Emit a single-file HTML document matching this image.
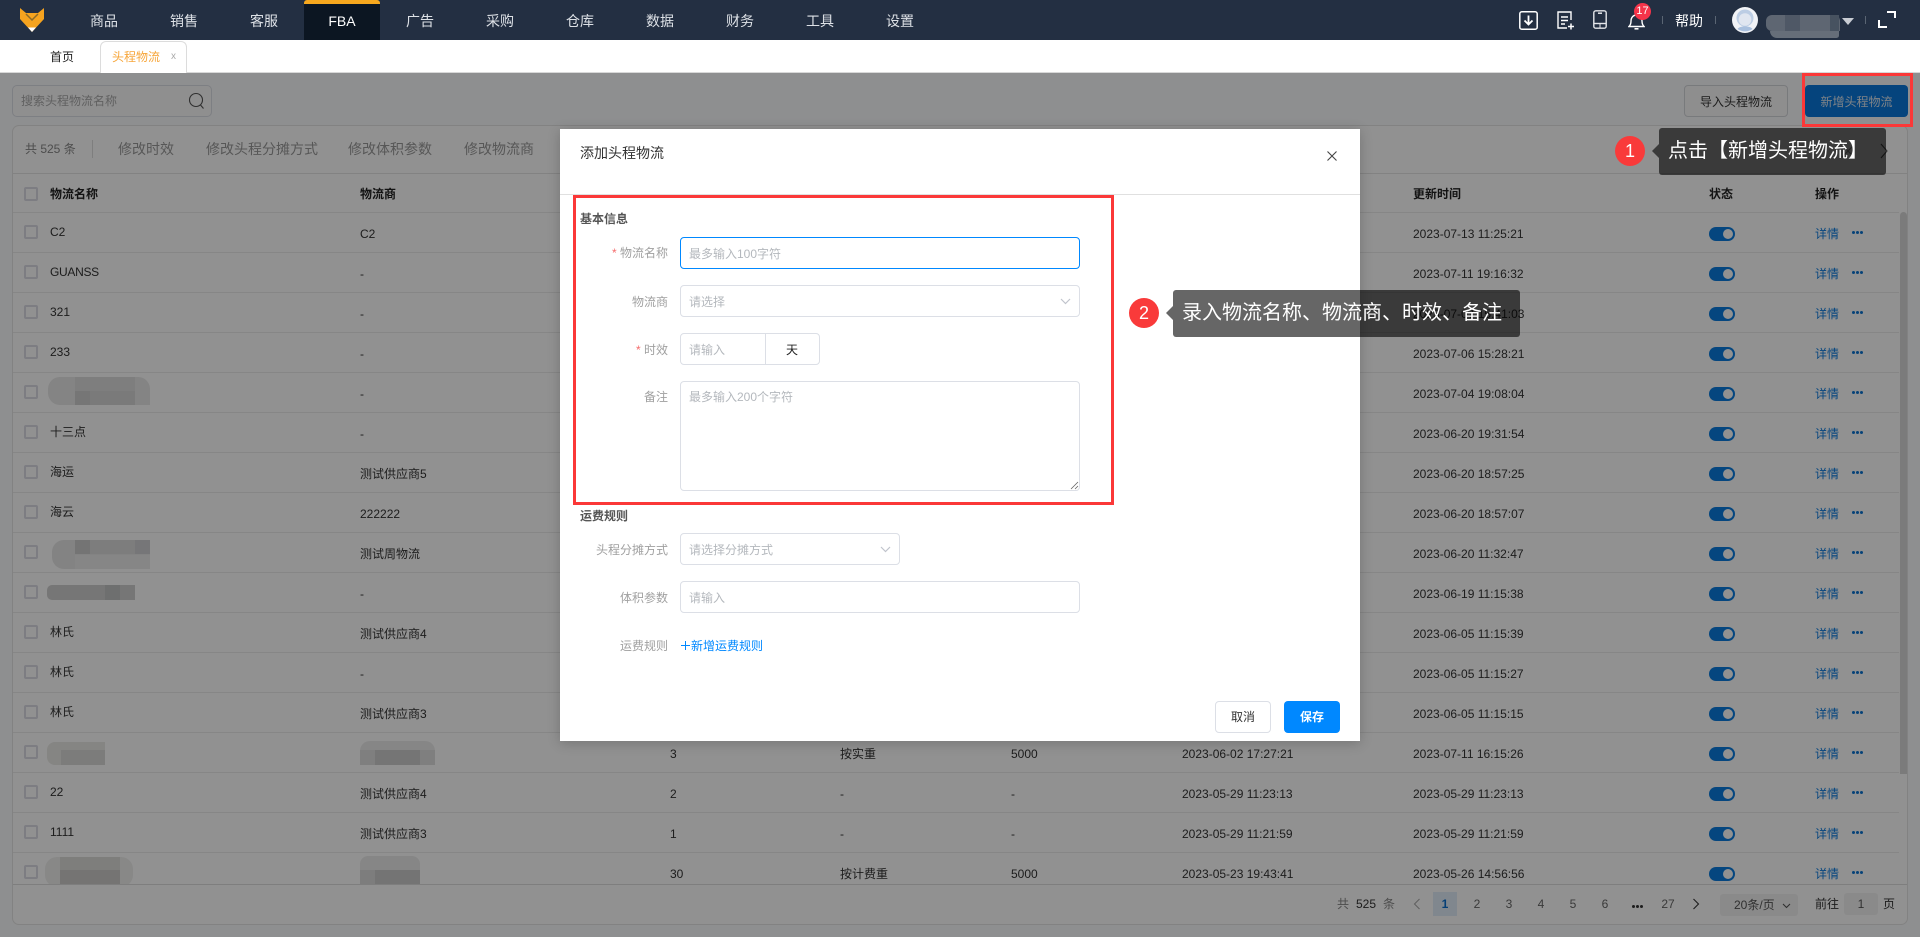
<!DOCTYPE html>
<html lang="zh-CN">
<head>
<meta charset="utf-8">
<title>头程物流</title>
<style>
html,body{margin:0;padding:0;width:1920px;height:937px;overflow:hidden;background:#fafbfd;font-family:"Liberation Sans","Noto Sans CJK SC",sans-serif;font-size:12px;color:#333}
*{box-sizing:border-box}
.a,.t{position:absolute}
.t{white-space:nowrap;line-height:16px}
#nav{left:0;top:0;width:1920px;height:40px;background:#232f42;z-index:30}
#nav .m{position:absolute;top:12px;width:60px;text-align:center;font-size:14px;line-height:18px;color:#dde1e6}
#tabs{left:0;top:40px;width:1920px;height:33px;background:#fff;border-bottom:1px solid #d8d8d8;z-index:30}
#mask{left:0;top:73px;width:1920px;height:864px;background:rgba(0,0,0,.43);z-index:10}
.card{left:12px;top:125px;width:1896px;height:800px;background:#fff;border:1px solid #e4e4e4;border-radius:7px}
.clip{left:0;top:0;width:1899px;height:885px;overflow:hidden}
.r{position:absolute;left:0;width:1899px;height:40px}
.r:before{content:"";position:absolute;left:13px;right:0;top:0;height:1px;background:#ebebeb}
.r .t{color:#333}
.cb{position:absolute;left:24px;top:13px;width:14px;height:14px;border:2px solid #dcdce4;border-radius:2px;background:#fff}
.n{left:50px;top:12px}.s{left:360px;top:14px}.c3{left:670px;top:14px}.c4{left:840px;top:14px}.c5{left:1011px;top:14px}.c6{left:1182px;top:14px}.u{left:1413px;top:14px}
.sw{position:absolute;left:1709px;top:15px;width:26px;height:14px;border-radius:7px;background:#0a7cdf}
.sw:after{content:"";position:absolute;right:2px;top:2px;width:10px;height:10px;border-radius:50%;background:#fff}
.r .lk{left:1815px;top:14px;color:#0c7ce0}
.dt{position:absolute;left:1852px;top:19px;width:11px;height:3px}
.dt:before{content:"";position:absolute;left:0;top:0;width:3px;height:3px;border-radius:50%;background:#0c74d4;box-shadow:4px 0 0 #0c74d4,8px 0 0 #0c74d4}
.bl{position:absolute;background:#e6e6e6;border-radius:12px}
.bl i{position:absolute;top:0;bottom:0;background:#d4d4d4}
#modal{left:560px;top:129px;width:800px;height:612px;background:#fff;z-index:20;box-shadow:0 2px 12px rgba(0,0,0,.2)}
.f{position:absolute;border:1px solid #dcdfe6;border-radius:4px;background:#fff;height:32px}
.ph{color:#b4b8bd}
.lb{color:#a0a0a0;text-align:right;width:120px;left:548px}
.lb em{font-style:normal;color:#f56c6c}
.sec{left:580px;font-weight:bold;color:#555}
.pg{top:896px;color:#666;width:24px;text-align:center}
.box{z-index:25;border:3px solid #fb3838;position:absolute;background:transparent}
.tip{z-index:26;position:absolute;background:rgba(0,0,0,.6);border-radius:3px;color:#fff;font-size:20px;line-height:28px;white-space:nowrap}
.tipa{z-index:26;position:absolute;width:0;height:0;border:7px solid transparent;border-right:7px solid rgba(0,0,0,.6);border-left:0}
.num{z-index:26;position:absolute;width:30px;height:30px;border-radius:50%;background:#f93a3a;color:#fff;text-align:center;line-height:30px;font-size:18px}
svg{display:block;position:absolute}
</style>
</head>
<body>

<!-- NAV -->
<div id="nav" class="a">
  <svg style="left:20px;top:8px" width="24" height="24" viewBox="0 0 24 24"><polygon points="0,0 6,5 18,5 24,0 24,11 12,24 0,11" fill="#f5a31f"/><polygon points="8,19.500 16,19.500 12,24" fill="#fff"/><polyline points="6,6 12,12 18,6" fill="none" stroke="#8a6a2a" stroke-width="1.500"/></svg>
  <div class="m" style="left:74px">商品</div>
  <div class="m" style="left:154px">销售</div>
  <div class="m" style="left:234px">客服</div>
  <div class="a" style="left:304px;top:0;width:76px;height:40px;background:#0c1622;border-top:4px solid #f7a81e;border-radius:3px 3px 0 0"></div>
  <div class="m" style="left:312px;color:#fff">FBA</div>
  <div class="m" style="left:390px">广告</div>
  <div class="m" style="left:470px">采购</div>
  <div class="m" style="left:550px">仓库</div>
  <div class="m" style="left:630px">数据</div>
  <div class="m" style="left:710px">财务</div>
  <div class="m" style="left:790px">工具</div>
  <div class="m" style="left:870px">设置</div>

  <svg style="left:1519px;top:11px" width="19" height="19" viewBox="0 0 19 19" fill="none" stroke="#fff" stroke-width="1.500"><rect x=".8" y=".8" width="17.400" height="17.400" rx="2"/><path d="M9.500 4.500v9M5.500 9.500l4 4 4-4" stroke-width="1.800"/></svg>
  <svg style="left:1557px;top:11px" width="18" height="19" viewBox="0 0 18 19" fill="none" stroke="#fff" stroke-width="1.400"><path d="M14 9V1H1v16h9"/><path d="M4 6h7M4 9.500h7M4 13h4"/><path d="M14 12.500v6M11 15.500h6" stroke-width="1.500"/></svg>
  <svg style="left:1593px;top:10px" width="14" height="19" viewBox="0 0 14 19" fill="none" stroke="#e4e6ea" stroke-width="1.400"><rect x=".8" y=".8" width="12.400" height="17.400" rx="2"/><path d="M1 13.500h12"/><path d="M5 3.200h4" stroke-width="1.500"/><path d="M7 14v4" stroke-width="1"/></svg>
  <svg style="left:1628px;top:12px" width="17" height="18" viewBox="0 0 17 18" fill="none" stroke="#fff" stroke-width="1.400"><path d="M1 14.500c1.500-1.500 2-3 2-5.500 0-3.500 2.200-6 5.500-6s5.500 2.500 5.500 6c0 2.500.5 4 2 5.500z"/><path d="M6.500 16.800h4" stroke-width="1.600"/></svg>
  <div class="a" style="left:1634px;top:3px;width:17px;height:17px;border-radius:50%;background:#f5344a;color:#fff;font-size:11px;line-height:17px;text-align:center">17</div>
  <div class="a" style="left:1662px;top:16px;width:1px;height:8px;background:#5a6573"></div>
  <div class="t" style="left:1675px;top:12px;font-size:14px;line-height:18px;color:#fff">帮助</div>
  <div class="a" style="left:1715px;top:16px;width:1px;height:8px;background:#5a6573"></div>
  <svg style="left:1732px;top:7px" width="26" height="26" viewBox="0 0 26 26"><circle cx="13" cy="13" r="13" fill="#f1f3f7"/><circle cx="13" cy="11" r="8.500" fill="#bccde4"/><circle cx="13" cy="12.500" r="6.300" fill="#e0e6f0"/><path d="M5.500 22c2-3.500 13-3.500 15 0a13 13 0 0 1-15 0z" fill="#a9c0de"/></svg>
  <div class="a" style="left:1766px;top:15px;width:74px;height:16px;background:#5e6672;border-radius:6px 6px 0 6px"></div>
  <div class="a" style="left:1785px;top:15px;width:15px;height:16px;background:#4f5866"></div>
  <div class="a" style="left:1830px;top:15px;width:9px;height:16px;background:#475260"></div>
  <div class="a" style="left:1770px;top:31px;width:69px;height:7px;background:#666e79;border-radius:0 0 8px 22px"></div>
  <div class="a" style="left:1842px;top:18px;width:0;height:0;border:6px solid transparent;border-top:7px solid #c8ccd3;border-bottom:0"></div>
  <div class="a" style="left:1865px;top:16px;width:1px;height:8px;background:#5a6573"></div>
  <svg style="left:1878px;top:10px" width="18" height="19" viewBox="0 0 18 19" fill="none" stroke="#fff" stroke-width="2"><path d="M9 2h8v6"/><path d="M1 10v7h8"/></svg>
</div>

<!-- TABS -->
<div id="tabs" class="a">
  <div class="t" style="left:50px;top:9px;color:#222">首页</div>
  <div class="a" style="left:100px;top:1px;width:87px;height:32px;background:#fff;border:1px solid #dcdcdc;border-bottom:0;border-radius:6px 6px 0 0"></div>
  <div class="t" style="left:112px;top:9px;color:#f7a63a">头程物流</div>
  <div class="t" style="left:171px;top:9px;color:#aaa;font-size:10px">x</div>
</div>

<!-- SEARCH -->
<div class="a" style="left:12px;top:85px;width:200px;height:32px;border:1px solid #dcdfe6;border-radius:5px;background:#fbfbfc"></div>
<div class="t" style="left:21px;top:93px;color:#aaa">搜索头程物流名称</div>
<svg style="left:188px;top:92px" width="17" height="18" viewBox="0 0 17 18" fill="none" stroke="#555" stroke-width="1.100"><circle cx="8" cy="8" r="6.500"/><path d="M12.500 13l3 3.500"/></svg>

<div class="a" style="left:1684px;top:85px;width:104px;height:32px;border:1px solid #d4d6da;border-radius:4px;background:#fafafa;color:#333;text-align:center;line-height:32px">导入头程物流</div>
<div class="a" style="left:1805px;top:85px;width:103px;height:32px;border-radius:4px;background:#0a78dc;color:#dfe6ee;text-align:center;line-height:34px">新增头程物流</div>

<!-- CARD -->
<div class="a card"></div>
<div class="a" style="left:13px;top:173px;width:1894px;height:1px;background:#e4e4e4"></div>
<div class="t" style="left:25px;top:141px;color:#888">共 525 条</div>
<div class="a" style="left:92px;top:140px;width:1px;height:18px;background:#dedede"></div>
<div class="t" style="left:118px;top:141px;color:#999;font-size:14px">修改时效</div>
<div class="t" style="left:206px;top:141px;color:#999;font-size:14px">修改头程分摊方式</div>
<div class="t" style="left:348px;top:141px;color:#999;font-size:14px">修改体积参数</div>
<div class="t" style="left:464px;top:141px;color:#999;font-size:14px">修改物流商</div>
<svg style="left:1840px;top:143px" width="16" height="16" viewBox="0 0 16 16" fill="none" stroke="#999" stroke-width="1.200"><path d="M2 2l12 12M14 2L2 14"/></svg>
<svg style="left:1880px;top:143px" width="9" height="16" viewBox="0 0 9 16" fill="none" stroke="#555" stroke-width="1.100"><path d="M1 1l6 7-6 7"/></svg>

<!-- TABLE HEAD -->
<div class="cb" style="top:187px"></div>
<div class="t" style="left:50px;top:186px;font-weight:bold;color:#222">物流名称</div>
<div class="t" style="left:360px;top:186px;font-weight:bold;color:#222">物流商</div>
<div class="t" style="left:1413px;top:186px;font-weight:bold;color:#222">更新时间</div>
<div class="t" style="left:1709px;top:186px;font-weight:bold;color:#222">状态</div>
<div class="t" style="left:1815px;top:186px;font-weight:bold;color:#222">操作</div>

<!-- TABLE BODY -->
<div class="a clip">
<div class="r" style="top:212px"><i class="cb"></i><span class="t n">C2</span><span class="t s">C2</span><span class="t u">2023-07-13 11:25:21</span><i class="sw"></i><span class="t lk">详情</span><i class="dt"></i></div>
<div class="r" style="top:252px"><i class="cb"></i><span class="t n" style="letter-spacing:-.3px">GUANSS</span><span class="t s">-</span><span class="t u">2023-07-11 19:16:32</span><i class="sw"></i><span class="t lk">详情</span><i class="dt"></i></div>
<div class="r" style="top:292px"><i class="cb"></i><span class="t n">321</span><span class="t s">-</span><span class="t u">2023-07-07 15:41:03</span><i class="sw"></i><span class="t lk">详情</span><i class="dt"></i></div>
<div class="r" style="top:332px"><i class="cb"></i><span class="t n">233</span><span class="t s">-</span><span class="t u">2023-07-06 15:28:21</span><i class="sw"></i><span class="t lk">详情</span><i class="dt"></i></div>
<div class="r" style="top:372px"><i class="cb"></i><div class="bl" style="left:48px;top:5px;width:102px;height:28px;border-radius:12px 12px 0 12px;background:#e8e8e8"><i style="left:27px;width:60px;bottom:14px;background:#dedede"></i><i style="left:27px;width:15px;top:14px;background:#cfcfcf"></i><i style="left:42px;width:45px;top:14px;background:#d6d6d6"></i></div><span class="t s">-</span><span class="t u">2023-07-04 19:08:04</span><i class="sw"></i><span class="t lk">详情</span><i class="dt"></i></div>
<div class="r" style="top:412px"><i class="cb"></i><span class="t n">十三点</span><span class="t s">-</span><span class="t u">2023-06-20 19:31:54</span><i class="sw"></i><span class="t lk">详情</span><i class="dt"></i></div>
<div class="r" style="top:452px"><i class="cb"></i><span class="t n">海运</span><span class="t s">测试供应商5</span><span class="t u">2023-06-20 18:57:25</span><i class="sw"></i><span class="t lk">详情</span><i class="dt"></i></div>
<div class="r" style="top:492px"><i class="cb"></i><span class="t n">海云</span><span class="t s">222222</span><span class="t u">2023-06-20 18:57:07</span><i class="sw"></i><span class="t lk">详情</span><i class="dt"></i></div>
<div class="r" style="top:532px"><i class="cb"></i><div class="bl" style="left:52px;top:8px;width:98px;height:29px;border-radius:12px 12px 0 12px;background:#e6e6e6"><i style="left:23px;right:15px;bottom:15px;background:#dcdcdc"></i><i style="left:23px;width:15px;bottom:15px;background:#cccccc"></i><i style="right:0;width:15px;bottom:15px;background:#d0d0d4"></i><i style="left:23px;right:0;top:15px;background:#ececec"></i></div><span class="t s">测试周物流</span><span class="t u">2023-06-20 11:32:47</span><i class="sw"></i><span class="t lk">详情</span><i class="dt"></i></div>
<div class="r" style="top:572px"><i class="cb"></i><div class="bl" style="left:47px;top:13px;width:88px;height:15px;border-radius:5px 0 0 5px;background:#cfcfcf"><i style="left:58px;width:15px;background:#c2c4c4"></i></div><span class="t s">-</span><span class="t u">2023-06-19 11:15:38</span><i class="sw"></i><span class="t lk">详情</span><i class="dt"></i></div>
<div class="r" style="top:612px"><i class="cb"></i><span class="t n">林氏</span><span class="t s">测试供应商4</span><span class="t u">2023-06-05 11:15:39</span><i class="sw"></i><span class="t lk">详情</span><i class="dt"></i></div>
<div class="r" style="top:652px"><i class="cb"></i><span class="t n">林氏</span><span class="t s">-</span><span class="t u">2023-06-05 11:15:27</span><i class="sw"></i><span class="t lk">详情</span><i class="dt"></i></div>
<div class="r" style="top:692px"><i class="cb"></i><span class="t n">林氏</span><span class="t s">测试供应商3</span><span class="t u">2023-06-05 11:15:15</span><i class="sw"></i><span class="t lk">详情</span><i class="dt"></i></div>
<div class="r" style="top:732px"><i class="cb"></i><div class="bl" style="left:47px;top:10px;width:58px;height:23px;border-radius:8px 0 0 8px;background:#eaeae6"><i style="left:14px;right:0;top:8px;background:#dadad8"></i></div><div class="bl" style="left:360px;top:9px;width:75px;height:24px;border-radius:10px 10px 0 0;background:#ececec"><i style="left:0;right:0;top:9px;background:#e0e0e0"></i><i style="left:15px;width:45px;top:9px;background:#cecece"></i></div><span class="t c3">3</span><span class="t c4">按实重</span><span class="t c5">5000</span><span class="t c6">2023-06-02 17:27:21</span><span class="t u">2023-07-11 16:15:26</span><i class="sw"></i><span class="t lk">详情</span><i class="dt"></i></div>
<div class="r" style="top:772px"><i class="cb"></i><span class="t n">22</span><span class="t s">测试供应商4</span><span class="t c3">2</span><span class="t c4">-</span><span class="t c5">-</span><span class="t c6">2023-05-29 11:23:13</span><span class="t u">2023-05-29 11:23:13</span><i class="sw"></i><span class="t lk">详情</span><i class="dt"></i></div>
<div class="r" style="top:812px"><i class="cb"></i><span class="t n">1111</span><span class="t s">测试供应商3</span><span class="t c3">1</span><span class="t c4">-</span><span class="t c5">-</span><span class="t c6">2023-05-29 11:21:59</span><span class="t u">2023-05-29 11:21:59</span><i class="sw"></i><span class="t lk">详情</span><i class="dt"></i></div>
<div class="r" style="top:852px"><i class="cb"></i><div class="bl" style="left:45px;top:5px;width:88px;height:30px;background:#f0f0ee"><i style="left:15px;width:60px;top:0;bottom:14px;background:#dedddb"></i><i style="left:15px;width:60px;top:13px;background:#cecdcb"></i></div><div class="bl" style="left:360px;top:4px;width:60px;height:31px;border-radius:8px 8px 0 0;background:#ececec"><i style="left:0;right:0;top:14px;background:#dcdcdc"></i><i style="left:15px;width:45px;top:14px;background:#cdcdcd"></i></div><span class="t c3">30</span><span class="t c4">按计费重</span><span class="t c5">5000</span><span class="t c6">2023-05-23 19:43:41</span><span class="t u">2023-05-26 14:56:56</span><i class="sw"></i><span class="t lk">详情</span><i class="dt"></i></div>
</div>
<div class="a" style="left:13px;top:884px;width:1894px;height:1px;background:#dedede"></div>
<div class="a" style="left:1900px;top:212px;width:7px;height:562px;background:#d8d8d8;border-radius:4px 4px 0 0"></div>

<!-- PAGINATION -->
<div class="t" style="left:1337px;top:896px;color:#888">共</div>
<div class="t" style="left:1356px;top:896px;color:#333">525</div>
<div class="t" style="left:1383px;top:896px;color:#888">条</div>
<svg style="left:1413px;top:898px" width="8" height="12" viewBox="0 0 8 12" fill="none" stroke="#aaa" stroke-width="1.100"><path d="M6.500 1L1.500 6l5 5"/></svg>
<div class="a" style="left:1433px;top:892px;width:24px;height:24px;background:#e2eefa;color:#0a6fd0;text-align:center;line-height:24px;font-weight:bold">1</div>
<div class="t pg" style="left:1465px">2</div>
<div class="t pg" style="left:1497px">3</div>
<div class="t pg" style="left:1529px">4</div>
<div class="t pg" style="left:1561px">5</div>
<div class="t pg" style="left:1593px">6</div>
<div class="a" style="left:1632px;top:905px;width:3px;height:3px;border-radius:50%;background:#333;box-shadow:4px 0 0 #333,8px 0 0 #333"></div>
<div class="t pg" style="left:1656px">27</div>
<svg style="left:1692px;top:898px" width="8" height="12" viewBox="0 0 8 12" fill="none" stroke="#333" stroke-width="1.100"><path d="M1.500 1l5 5-5 5"/></svg>
<div class="a" style="left:1720px;top:894px;width:78px;height:22px;background:#f3f3f3;border-radius:3px"></div>
<div class="t" style="left:1734px;top:897px;color:#555">20条/页</div>
<svg style="left:1782px;top:903px" width="9" height="6" viewBox="0 0 9 6" fill="none" stroke="#555" stroke-width="1.100"><path d="M1 1l3.500 3.500L8 1"/></svg>
<div class="t" style="left:1815px;top:896px;color:#333">前往</div>
<div class="a" style="left:1844px;top:893px;width:34px;height:22px;background:#f3f3f3;border-radius:3px;text-align:center;line-height:22px;color:#555">1</div>
<div class="t" style="left:1883px;top:896px;color:#333">页</div>

<div id="mask" class="a"></div>

<!-- MODAL -->
<div id="modal" class="a"></div>
<div style="position:absolute;left:0;top:0;z-index:21;width:0;height:0">
  <div class="t" style="left:580px;top:144px;font-size:14px;line-height:18px;color:#333">添加头程物流</div>
  <svg style="left:1326px;top:150px" width="12" height="12" viewBox="0 0 12 12" fill="none" stroke="#444" stroke-width="1.100"><path d="M1.500 1.500l9 9M10.500 1.500l-9 9"/></svg>
  <div class="a" style="left:560px;top:194px;width:800px;height:1px;background:#e0e0e0"></div>

  <div class="t sec" style="top:211px">基本信息</div>

  <div class="t lb" style="top:245px"><em>* </em>物流名称</div>
  <div class="f" style="left:680px;top:237px;width:400px;border-color:#0088ff"></div>
  <div class="t ph" style="left:689px;top:246px">最多输入100字符</div>

  <div class="t lb" style="top:294px">物流商</div>
  <div class="f" style="left:680px;top:285px;width:400px"></div>
  <div class="t ph" style="left:689px;top:294px">请选择</div>
  <svg style="left:1060px;top:298px" width="11" height="7" viewBox="0 0 11 7" fill="none" stroke="#c0c4cc" stroke-width="1.200"><path d="M1 1l4.500 4.500L10 1"/></svg>

  <div class="t lb" style="top:342px"><em>* </em>时效</div>
  <div class="f" style="left:680px;top:333px;width:140px"></div>
  <div class="a" style="left:765px;top:333px;width:1px;height:32px;background:#dcdfe6"></div>
  <div class="t ph" style="left:689px;top:342px">请输入</div>
  <div class="t" style="left:786px;top:342px;color:#222">天</div>

  <div class="t lb" style="top:389px">备注</div>
  <div class="f" style="left:680px;top:381px;width:400px;height:110px"></div>
  <div class="t ph" style="left:689px;top:389px">最多输入200个字符</div>
  <svg style="left:1070px;top:481px" width="9" height="9" viewBox="0 0 9 9" fill="none" stroke="#666" stroke-width=".8"><path d="M1 8l7-7M5 8l3-3"/></svg>

  <div class="t sec" style="top:508px">运费规则</div>

  <div class="t lb" style="top:542px">头程分摊方式</div>
  <div class="f" style="left:680px;top:533px;width:220px"></div>
  <div class="t ph" style="left:689px;top:542px">请选择分摊方式</div>
  <svg style="left:880px;top:546px" width="11" height="7" viewBox="0 0 11 7" fill="none" stroke="#c0c4cc" stroke-width="1.200"><path d="M1 1l4.500 4.500L10 1"/></svg>

  <div class="t lb" style="top:590px">体积参数</div>
  <div class="f" style="left:680px;top:581px;width:400px"></div>
  <div class="t ph" style="left:689px;top:590px">请输入</div>

  <div class="t lb" style="top:638px">运费规则</div>
  <svg style="left:681px;top:641px" width="9" height="9" viewBox="0 0 9 9" fill="none" stroke="#0088ff" stroke-width="1"><path d="M4.500 0v9M0 4.500h9"/></svg>
  <div class="t" style="left:691px;top:638px;color:#0088ff">新增运费规则</div>

  <div class="a" style="left:1215px;top:701px;width:56px;height:32px;border:1px solid #dcdfe6;border-radius:4px;background:#fff;text-align:center;line-height:30px;color:#333">取消</div>
  <div class="a" style="left:1284px;top:701px;width:56px;height:32px;border-radius:4px;background:#0088ff;text-align:center;line-height:32px;color:#fff;font-weight:bold">保存</div>
</div>

<!-- ANNOTATIONS -->
<div class="box" style="left:1802px;top:73px;width:111px;height:54px"></div>
<div class="box" style="left:573px;top:195px;width:541px;height:310px"></div>

<div class="num" style="left:1615px;top:136px">1</div>
<div class="tipa" style="left:1652px;top:144px"></div>
<div class="tip" style="left:1659px;top:128px;width:227px;height:47px;padding:9px 0 0 9px">点击【新增头程物流】</div>

<div class="num" style="left:1129px;top:298px">2</div>
<div class="tipa" style="left:1166px;top:306px"></div>
<div class="tip" style="left:1173px;top:290px;width:347px;height:47px;padding:9px 0 0 9px">录入物流名称、物流商、时效、备注</div>

</body>
</html>
